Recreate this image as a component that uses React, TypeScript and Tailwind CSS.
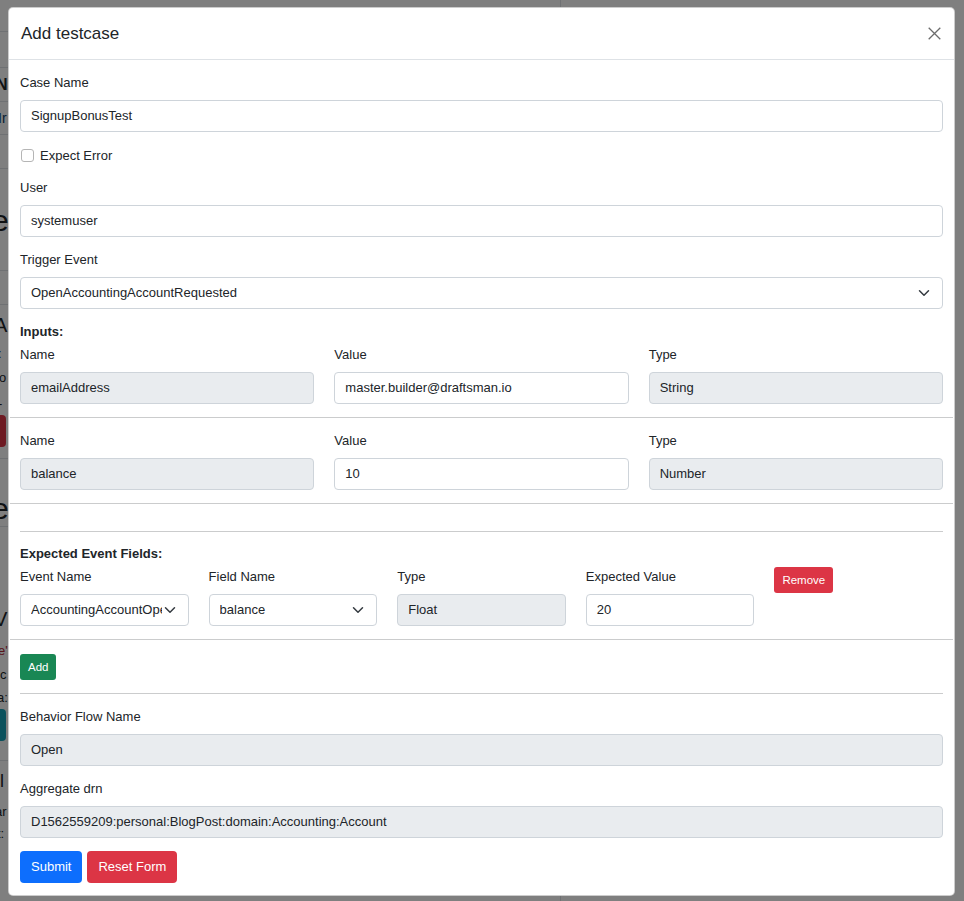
import React from "react"

const font = { fontFamily: '"Liberation Sans", Arial, sans-serif' }

function Chevron() {
  return (
    <svg width="16" height="12" viewBox="0 0 16 16" className="shrink-0">
      <path d="m2 5 6 6 6-6" fill="none" stroke="#343a40" strokeWidth="2" strokeLinecap="round" strokeLinejoin="round" />
    </svg>
  )
}

function Label({ children, className = "" }: { children: React.ReactNode; className?: string }) {
  return <div className={`h-[21px] leading-[21px] mb-[7px] text-[13px] text-[#212529] ${className}`}>{children}</div>
}

function Input({ value, disabled }: { value: string; disabled?: boolean }) {
  return (
    <div
      className={`h-[32px] rounded-[4px] border border-[#ced4da] pl-[10px] pr-[10px] flex items-center text-[13px] text-[#212529] whitespace-nowrap overflow-hidden ${
        disabled ? "bg-[#e9ecef]" : "bg-white"
      }`}
    >
      {value}
    </div>
  )
}

function Select({ value }: { value: string }) {
  return (
    <div className="h-[32px] rounded-[4px] border border-[#ced4da] bg-white pl-[10px] pr-[10px] flex items-center text-[13px] text-[#212529]">
      <div className="flex-1 min-w-0 overflow-hidden whitespace-nowrap">{value}</div>
      <Chevron />
    </div>
  )
}

function Field({ label, children }: { label: string; children: React.ReactNode }) {
  return (
    <div>
      <Label>{label}</Label>
      {children}
    </div>
  )
}

function WideRule({ className = "" }: { className?: string }) {
  return <div className={`-mx-[10px] h-px bg-[#cbcccd] ${className}`} />
}

function Rule({ className = "" }: { className?: string }) {
  return <div className={`h-px bg-[#cbcccd] ${className}`} />
}

// page that sits behind the backdrop, only a thin strip of it shows
function BackgroundPage() {
  return (
    <div className="fixed inset-0 bg-white overflow-hidden flex" style={font}>
      <div className="w-[561px] border-r border-[#dee2e6] flex flex-col text-[#212529]">
        <div className="h-[32px] border-b border-[#dee2e6]" />
        <div className="h-[36px] border-b border-[#dee2e6]" />
        <div className="h-[34px] border-b border-[#dee2e6] -ml-[4px] text-[16px] font-bold leading-[34px]">N</div>
        <div className="h-[33px] border-b border-[#dee2e6] -ml-[2px] text-[14px] text-[#0d3b66] leading-[33px]">Ir</div>
        <div className="h-[34px] border-b border-[#dee2e6]" />
        <div className="h-[102px] border-b border-[#dee2e6] -ml-[8px] text-[30px] leading-[104px]">e</div>
        <div className="h-[34px] border-b border-[#dee2e6]" />
        <div className="h-[40px] -ml-[6px] text-[20px] leading-[40px]">A</div>
        <div className="h-[18px] -ml-[2px] text-[13px] leading-[18px]">:</div>
        <div className="h-[30px] -ml-[4px] text-[13px] leading-[30px]">lo</div>
        <div className="h-[22px] -ml-[2px] text-[13px] leading-[22px]">-</div>
        <div className="h-[32px] -ml-[20px] w-[26px] rounded-[4px] bg-[#dc3545]" />
        <div className="h-[12px] border-b border-[#dee2e6]" />
        <div className="h-[68px] border-b border-[#dee2e6] -ml-[8px] text-[30px] leading-[100px]">e</div>
        <div className="h-[72px]" />
        <div className="h-[40px] -ml-[6px] text-[20px] leading-[40px]">V</div>
        <div className="h-[24px] -ml-[2px] text-[13px] text-[#b02a37] leading-[24px]">e'</div>
        <div className="h-[24px] -ml-[3px] text-[13px] leading-[24px]">ic</div>
        <div className="h-[22px] -ml-[3px] text-[13px] leading-[22px]">a:</div>
        <div className="h-[32px] -ml-[20px] w-[26px] rounded-[4px] bg-[#17a2b8]" />
        <div className="h-[20px] border-b border-[#dee2e6]" />
        <div className="h-[40px] -ml-[4px] text-[18px] leading-[40px]">il</div>
        <div className="h-[22px] -ml-[5px] text-[13px] leading-[22px]">ar</div>
        <div className="h-[22px] -ml-[3px] text-[13px] leading-[22px]">t:</div>
      </div>
      <div className="flex-1" />
    </div>
  )
}

export default function App() {
  return (
    <div style={font}>
      <BackgroundPage />
      <div className="fixed inset-0 bg-black/50 pl-[8px] pt-[7px]">
        <div className="w-[947px] h-[889px] bg-white rounded-[5px] border border-black/20 flex flex-col overflow-hidden">
          {/* header */}
          <div className="h-[52px] shrink-0 border-b border-[#dee2e6] pl-[12px] pr-[13px] flex items-center justify-between">
            <h5 className="text-[17px] leading-[26px] text-[#212529] font-medium">Add testcase</h5>
            <svg width="13" height="13" viewBox="0 0 13 13">
              <path d="M0.7 0.7 12.3 12.3 M12.3 0.7 0.7 12.3" stroke="#6c6c6c" strokeWidth="1.3" />
            </svg>
          </div>

          {/* body */}
          <div className="pl-[11px] pr-[11px] pt-[12px]">
            <Field label="Case Name">
              <Input value="SignupBonusTest" />
            </Field>

            <div className="mt-[13px] h-[21px] flex items-center gap-[6px] text-[13px] text-[#212529]">
              <div className="ml-[1px] w-[13px] h-[13px] rounded-[3px] border border-[#b5b5b5] bg-white" />
              <span>Expect Error</span>
            </div>

            <div className="mt-[11px]">
              <Field label="User">
                <Input value="systemuser" />
              </Field>
            </div>

            <div className="mt-[12px]">
              <Field label="Trigger Event">
                <Select value="OpenAccountingAccountRequested" />
              </Field>
            </div>

            <div className="mt-[12px] h-[21px] leading-[21px] text-[13px] font-bold text-[#212529]">Inputs:</div>

            <div className="mt-[2px] grid grid-cols-3 gap-x-[20px]">
              <Field label="Name">
                <Input value="emailAddress" disabled />
              </Field>
              <Field label="Value">
                <Input value="master.builder@draftsman.io" />
              </Field>
              <Field label="Type">
                <Input value="String" disabled />
              </Field>
            </div>

            <WideRule className="mt-[13px]" />

            <div className="mt-[12px] grid grid-cols-3 gap-x-[20px]">
              <Field label="Name">
                <Input value="balance" disabled />
              </Field>
              <Field label="Value">
                <Input value="10" />
              </Field>
              <Field label="Type">
                <Input value="Number" disabled />
              </Field>
            </div>

            <WideRule className="mt-[13px]" />

            <Rule className="mt-[27px]" />

            <div className="mt-[11px] h-[21px] leading-[21px] text-[13px] font-bold text-[#212529]">Expected Event Fields:</div>

            <div className="mt-[2px] grid grid-cols-5 gap-x-[20px]">
              <Field label="Event Name">
                <Select value="AccountingAccountOpened" />
              </Field>
              <Field label="Field Name">
                <Select value="balance" />
              </Field>
              <Field label="Type">
                <Input value="Float" disabled />
              </Field>
              <Field label="Expected Value">
                <Input value="20" />
              </Field>
              <div className="pt-[1px]">
                <button className="h-[26px] px-[8px] rounded-[3px] bg-[#dc3545] text-white text-[11.5px] leading-[26px]">Remove</button>
              </div>
            </div>

            <WideRule className="mt-[13px]" />

            <button className="mt-[14px] h-[26px] px-[8px] rounded-[3px] bg-[#198754] text-white text-[11.5px] leading-[26px] block">Add</button>

            <Rule className="mt-[13px]" />

            <div className="mt-[12px]">
              <Field label="Behavior Flow Name">
                <Input value="Open" disabled />
              </Field>
            </div>

            <div className="mt-[12px]">
              <Field label="Aggregate drn">
                <Input value="D1562559209:personal:BlogPost:domain:Accounting:Account" disabled />
              </Field>
            </div>

            <div className="mt-[13px] flex gap-[5px]">
              <button className="h-[32px] px-[11px] rounded-[4px] bg-[#0d6efd] text-white text-[13px]">Submit</button>
              <button className="h-[32px] px-[11px] rounded-[4px] bg-[#dc3545] text-white text-[13px]">Reset Form</button>
            </div>
          </div>
        </div>
      </div>
    </div>
  )
}
